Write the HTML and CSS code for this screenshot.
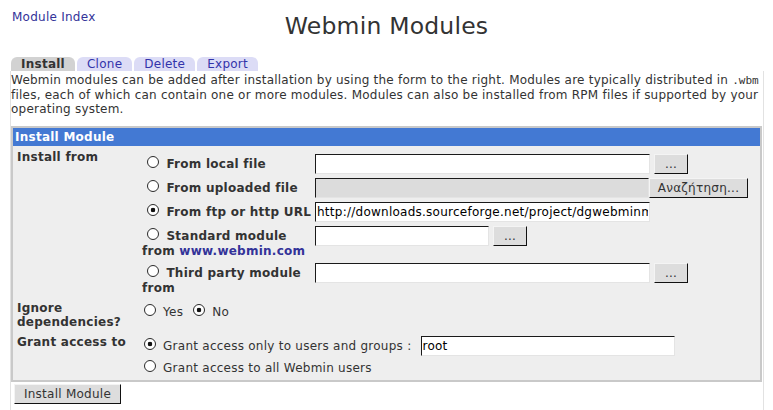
FILE: index.html
```html
<!DOCTYPE html>
<html>
<head>
<meta charset="utf-8">
<title>Webmin Modules</title>
<link rel="stylesheet" href="styles.css">
</head>
<body>
<div class="header">
  <div class="header-left"><a class="link" href="#">Module Index</a></div>
  <h1 class="title">Webmin Modules</h1>
  <div class="header-right"></div>
</div>

<div class="tabs">
  <span class="tab tab-active">Install</span>
  <a class="tab" href="#">Clone</a>
  <a class="tab" href="#">Delete</a>
  <a class="tab" href="#">Export</a>
</div>

<div class="panel">
  <p class="intro">Webmin modules can be added after installation by using the form to the right. Modules are typically distributed in <code class="mono">.wbm</code> files, each of which can contain one or more modules. Modules can also be installed from RPM files if supported by your operating system.</p>

  <div class="box">
    <div class="box-head">Install Module</div>
    <div class="box-body">
      <div class="label">Install from</div>
      <div class="value">
        <div class="sources">
          <label class="src"><input class="radio" type="radio" name="src"> From local file</label>
          <div class="field"><input class="text w-long" type="text"><button class="btn btn-dots" type="button">...</button></div>

          <label class="src"><input class="radio" type="radio" name="src"> From uploaded file</label>
          <div class="field field-file"><input class="text text-disabled w-file" type="text"><button class="btn btn-browse" type="button">Αναζήτηση...</button></div>

          <label class="src"><input class="radio" type="radio" name="src" checked> From ftp or http URL</label>
          <div class="field"><input class="text w-long" type="text" value="http://downloads.sourceforge.net/project/dgwebminmodules"></div>

          <label class="src"><input class="radio" type="radio" name="src"> Standard module from <a class="link" href="#">www.webmin.com</a></label>
          <div class="field"><input class="text w-short" type="text"><button class="btn btn-dots" type="button">...</button></div>

          <label class="src"><input class="radio" type="radio" name="src"> Third party module from</label>
          <div class="field"><input class="text w-long" type="text"><button class="btn btn-dots" type="button">...</button></div>
        </div>
      </div>

      <div class="label">Ignore dependencies?</div>
      <div class="value value-plain">
        <label class="opt"><input class="radio" type="radio" name="nodeps"> Yes</label>
        <label class="opt"><input class="radio" type="radio" name="nodeps" checked> No</label>
      </div>

      <div class="label">Grant access to</div>
      <div class="value value-plain">
        <div class="grant-line"><input class="radio" type="radio" name="grant" checked> Grant access only to users and groups : <input class="text w-grant" type="text" value="root"></div>
        <div class="grant-line"><input class="radio" type="radio" name="grant"> Grant access to all Webmin users</div>
      </div>
    </div>
  </div>

  <button class="btn btn-submit" type="button">Install Module</button>
</div>
</body>
</html>
```

FILE: styles.css
```css
html, body {
  margin: 0;
  padding: 0;
  background: #ffffff;
}

body {
  font-family: "DejaVu Sans", Verdana, sans-serif;
  font-size: 12px;
  line-height: 14px;
  letter-spacing: 0.25px;
  color: #333333;
}

.link {
  color: #333399;
  text-decoration: none;
}

.header {
  display: grid;
  grid-template-columns: 1fr auto 1fr;
  align-items: start;
  padding: 10px 0 0 12px;
  height: 30px;
}

.title {
  margin: 2px 0 0 -12px;
  font-size: 23.5px;
  line-height: 28px;
  font-weight: normal;
  letter-spacing: 0.2px;
  color: #333333;
}

.tabs {
  display: flex;
  gap: 2px;
  margin: 17px 0 0 11px;
  height: 14px;
}

.tab {
  display: block;
  height: 14px;
  line-height: 14px;
  padding: 0 10px;
  border-radius: 6px 6px 0 0;
  background: #dcdcf6;
  color: #3333aa;
  text-decoration: none;
}

.tab-active {
  padding: 0 10px;
  background: #d2d2d2;
  color: #333333;
  font-weight: bold;
}

.panel {
  margin: 0 9px 0 10px;
  border-left: 1px solid #e2e2e2;
  border-right: 1px solid #e2e2e2;
  padding: 2px 0 20px 0;
}

.intro {
  margin: 0;
  padding: 0;
  letter-spacing: 0.22px;
}

.mono {
  font-family: "DejaVu Sans Mono", monospace;
  font-size: 11px;
  letter-spacing: 0;
}

.box {
  margin: 10px 1px 0 0;
  border: 2px solid #c9c9c9;
  background: #eeeeee;
}

.box-head {
  background: #4379d3;
  color: #ffffff;
  font-weight: bold;
  padding: 2px 2px;
}

.box-body {
  display: grid;
  grid-template-columns: 126px 1fr;
  row-gap: 2px;
  padding: 2px 0 3px 0;
}

.label {
  padding: 2px 4px;
  font-weight: bold;
}

.value {
  padding: 2px 0;
}

.sources {
  display: grid;
  grid-template-columns: 170px auto;
  column-gap: 3px;
  row-gap: 3px;
  align-items: baseline;
  padding: 3px 0 0 3px;
  margin-bottom: -1px;
}

.src {
  font-weight: bold;
  line-height: 15px;
}

.field {
  display: flex;
  align-items: baseline;
  gap: 4px;
}

.field-file {
  gap: 0;
}

.radio {
  appearance: none;
  -webkit-appearance: none;
  box-sizing: border-box;
  width: 12px;
  height: 12px;
  margin: 3px 3px 0 5px;
  border: 1px solid #2a2a2a;
  border-radius: 50%;
  background: #ffffff;
  vertical-align: baseline;
}

.radio:checked {
  background: radial-gradient(circle, #111111 0, #111111 2px, #ffffff 2.6px);
}

.text {
  box-sizing: border-box;
  height: 20px;
  margin: 0;
  padding: 0 1px;
  font-family: "DejaVu Sans", Verdana, sans-serif;
  font-size: 12px;
  letter-spacing: 0.25px;
  color: #000000;
  background: #ffffff;
  border: 1px solid;
  border-color: #1a1a1a #e4e4e4 #e4e4e4 #1a1a1a;
  border-radius: 0;
  outline: none;
}

.text-disabled {
  background: #dcdcdc;
}

.w-long { width: 335px; }
.w-file { width: 334px; }
.w-short { width: 174px; }
.w-grant { width: 254px; margin: 1px 0 1px 5px; }

.btn {
  box-sizing: border-box;
  height: 20px;
  margin: 0;
  font-family: "DejaVu Sans", Verdana, sans-serif;
  font-size: 12px;
  letter-spacing: 0.25px;
  color: #333333;
  background: #dddddd;
  border: 1px solid;
  border-color: #f4f4f4 #111111 #111111 #f4f4f4;
  border-radius: 0;
  padding: 0 6px;
}

.btn-dots {
  width: 34px;
  padding: 0;
}

.btn-browse {
  width: 99px;
  padding: 0;
}

.value-plain {
  padding-left: 0;
}

.opt {
  margin-right: 1px;
}

.grant-line {
  line-height: 14px;
}

.btn-submit {
  margin: 2px 0 0 3px;
  width: 107px;
  padding: 0;
}
```
